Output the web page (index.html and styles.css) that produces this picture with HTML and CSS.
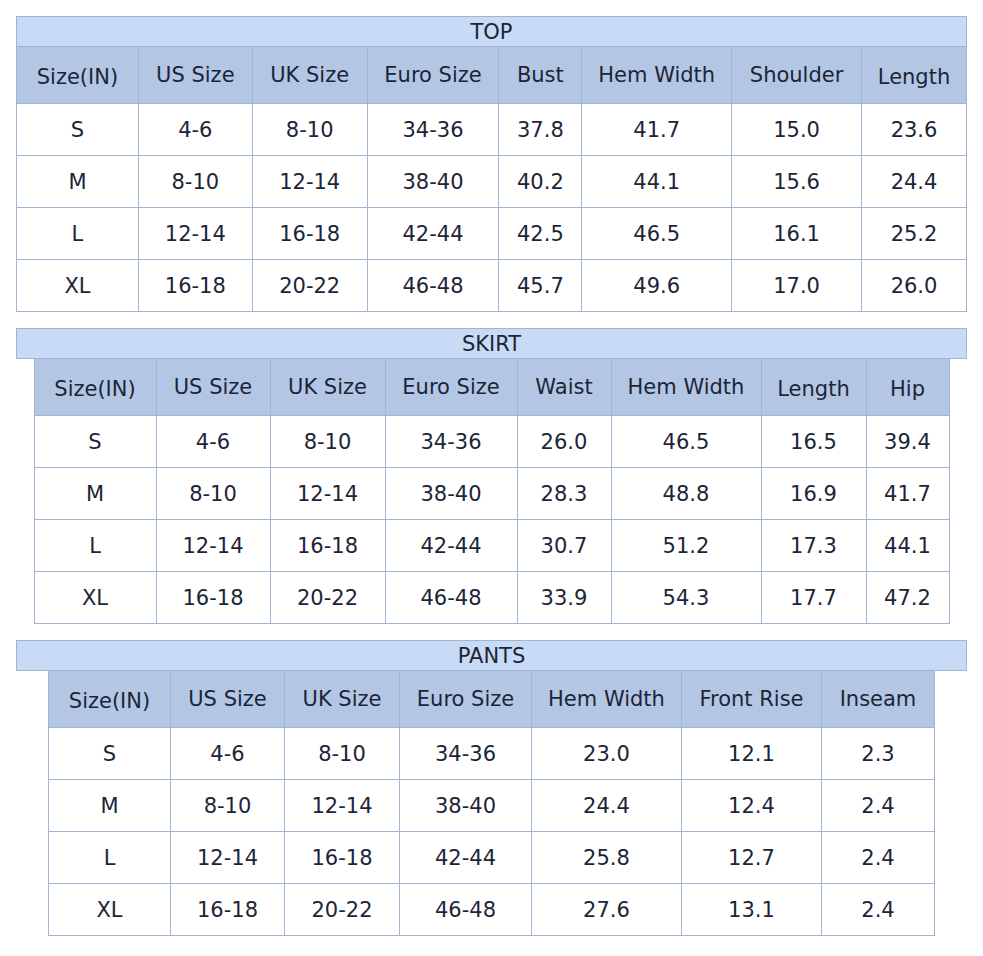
FILE: index.html
```html
<!DOCTYPE html>
<html>
<head>
<meta charset="utf-8">
<link rel="stylesheet" href="styles.css">
</head>
<body>
<div class="page">
  <section class="chart">
    <div class="title">TOP</div>
    <table class="grid top">
      <colgroup><col style="width:122px"><col style="width:114px"><col style="width:115px"><col style="width:132px"><col style="width:83px"><col style="width:150px"><col style="width:130px"><col style="width:105px"></colgroup>
      <tr class="head"><th class="low">Size(IN)</th><th>US Size</th><th>UK Size</th><th>Euro Size</th><th>Bust</th><th>Hem Width</th><th>Shoulder</th><th class="low">Length</th></tr>
      <tr><td>S</td><td>4-6</td><td>8-10</td><td>34-36</td><td>37.8</td><td>41.7</td><td>15.0</td><td>23.6</td></tr>
      <tr><td>M</td><td>8-10</td><td>12-14</td><td>38-40</td><td>40.2</td><td>44.1</td><td>15.6</td><td>24.4</td></tr>
      <tr><td>L</td><td>12-14</td><td>16-18</td><td>42-44</td><td>42.5</td><td>46.5</td><td>16.1</td><td>25.2</td></tr>
      <tr><td>XL</td><td>16-18</td><td>20-22</td><td>46-48</td><td>45.7</td><td>49.6</td><td>17.0</td><td>26.0</td></tr>
    </table>
  </section>
  <section class="chart">
    <div class="title">SKIRT</div>
    <table class="grid">
      <colgroup><col style="width:122px"><col style="width:114px"><col style="width:115px"><col style="width:132px"><col style="width:94px"><col style="width:150px"><col style="width:105px"><col style="width:83px"></colgroup>
      <tr class="head"><th class="low">Size(IN)</th><th>US Size</th><th>UK Size</th><th>Euro Size</th><th>Waist</th><th>Hem Width</th><th class="low">Length</th><th class="low">Hip</th></tr>
      <tr><td>S</td><td>4-6</td><td>8-10</td><td>34-36</td><td>26.0</td><td>46.5</td><td>16.5</td><td>39.4</td></tr>
      <tr><td>M</td><td>8-10</td><td>12-14</td><td>38-40</td><td>28.3</td><td>48.8</td><td>16.9</td><td>41.7</td></tr>
      <tr><td>L</td><td>12-14</td><td>16-18</td><td>42-44</td><td>30.7</td><td>51.2</td><td>17.3</td><td>44.1</td></tr>
      <tr><td>XL</td><td>16-18</td><td>20-22</td><td>46-48</td><td>33.9</td><td>54.3</td><td>17.7</td><td>47.2</td></tr>
    </table>
  </section>
  <section class="chart">
    <div class="title">PANTS</div>
    <table class="grid">
      <colgroup><col style="width:122px"><col style="width:114px"><col style="width:115px"><col style="width:132px"><col style="width:150px"><col style="width:140px"><col style="width:113px"></colgroup>
      <tr class="head"><th class="low">Size(IN)</th><th>US Size</th><th>UK Size</th><th>Euro Size</th><th>Hem Width</th><th>Front Rise</th><th>Inseam</th></tr>
      <tr><td>S</td><td>4-6</td><td>8-10</td><td>34-36</td><td>23.0</td><td>12.1</td><td>2.3</td></tr>
      <tr><td>M</td><td>8-10</td><td>12-14</td><td>38-40</td><td>24.4</td><td>12.4</td><td>2.4</td></tr>
      <tr><td>L</td><td>12-14</td><td>16-18</td><td>42-44</td><td>25.8</td><td>12.7</td><td>2.4</td></tr>
      <tr><td>XL</td><td>16-18</td><td>20-22</td><td>46-48</td><td>27.6</td><td>13.1</td><td>2.4</td></tr>
    </table>
  </section>
</div>
</body>
</html>
```

FILE: styles.css
```css
html, body {
  margin: 0;
  padding: 0;
  background: #ffffff;
}
.page {
  padding: 16px 16px 0 16px;
  width: 951px;
  display: flex;
  flex-direction: column;
  gap: 16px;
  font-family: "DejaVu Sans", Verdana, sans-serif;
  font-size: 21px;
  color: #1c2536;
}
.chart {
  display: flex;
  flex-direction: column;
  align-items: center;
}
.title {
  box-sizing: border-box;
  width: 951px;
  height: 31px;
  background: #c8dbf6;
  border: 1px solid #a2b4d2;
  text-align: center;
  line-height: 29px;
  padding-top: 1px;
  overflow: hidden;
}
.grid {
  border-collapse: collapse;
  table-layout: fixed;
  margin-top: -1px;
}
.grid th, .grid td {
  border: 1px solid #a2b4d2;
  text-align: center;
  padding: 0;
  font-weight: normal;
}
.grid th {
  background: #b3c7e5;
  height: 53px;
  padding-top: 1px;
  padding-bottom: 2px;
}
.grid th.low {
  height: 52px;
  padding-top: 4px;
  padding-bottom: 0;
}
.grid td {
  height: 51px;
}
```
